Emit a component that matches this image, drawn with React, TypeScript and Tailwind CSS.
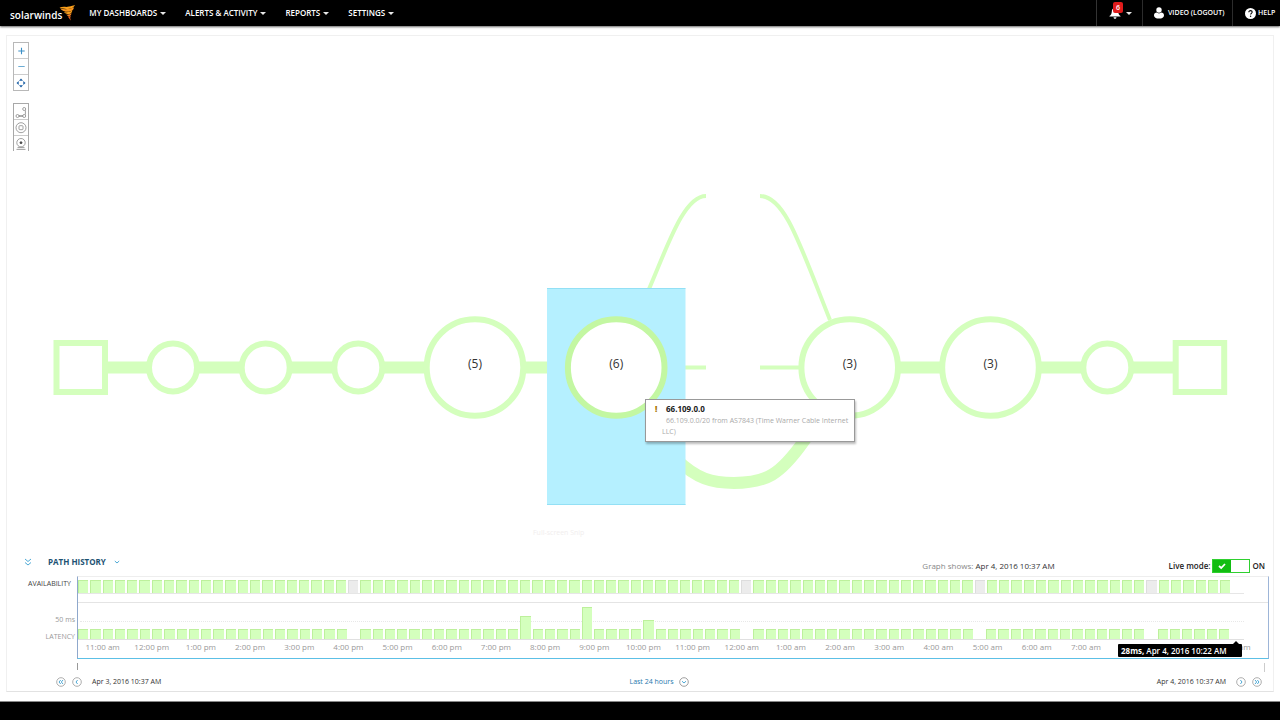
import type { ReactNode } from "react";

const BAR_COUNT = 94;
const MISSING = [22, 54, 73, 87];
const PEAKS: Record<number, number> = { 36: 23, 41: 32, 46: 19 };
const BARS = Array.from({ length: BAR_COUNT }, (_, i) => i);

const HOURS = [
  "11:00 am", "12:00 pm", "1:00 pm", "2:00 pm", "3:00 pm", "4:00 pm", "5:00 pm", "6:00 pm",
  "7:00 pm", "8:00 pm", "9:00 pm", "10:00 pm", "11:00 pm", "12:00 am", "1:00 am", "2:00 am",
  "3:00 am", "4:00 am", "5:00 am", "6:00 am", "7:00 am", "", "", "10:00 am",
];

const MENUS = ["MY DASHBOARDS", "ALERTS & ACTIVITY", "REPORTS", "SETTINGS"];

function Caret() {
  return (
    <svg viewBox="0 0 6 3" className="h-[3px] w-[6px]" fill="#e8e8e8" aria-hidden="true">
      <path d="M0 0h6L3 3z" />
    </svg>
  );
}

function Logo() {
  return (
    <a href="#home" className="flex h-full items-center text-white">
      <span className="pt-1 text-[10px] leading-4 font-semibold">solarwinds</span>
      <svg viewBox="0 0 17 16" className="-ml-[3px] h-4 w-[17px]" aria-hidden="true">
        <path d="M0.5 2.6C4 1.2 7 2.4 10 1.6 12.500 1 14 .6 16 0c-.8 1.500-1.700 2.400-3 3-3 1.200-8 1.600-12.500-.4z" fill="#f9a01b" />
        <path d="M1 3.200c4 1.600 9 1.400 13-.6L15 2.400c-.6 2.500-2.300 3.700-4.300 4.200C7.500 7.200 3.500 6.400 1 3.200z" fill="#f7941e" />
        <path d="M5 7c3 .5 6.300.2 8.300-1.500-.4 2.100-1.500 3.200-3.200 3.600C8 9.300 6.200 8.500 5 7z" fill="#f9a01b" />
        <path d="M7.400 9.600c2 .2 3.900-.2 5.200-1.300-.4 1.500-1.200 2.600-2.300 2.900-1.200.1-2.200-.3-2.900-1.600z" fill="#f58220" />
        <path d="M8.800 11.500c1.200.1 2.200-.2 3-.8-.3 1.200-.7 2-.5 2.700.2.600.4 1 .1 2.100-.4-1.400-1.700-2.400-2.600-4z" fill="#e8601c" />
      </svg>
    </a>
  );
}

function Header() {
  return (
    <header className="flex h-[26px] shrink-0 items-center bg-black pl-[10px] font-semibold text-white shadow-[0_1px_2px_#666]">
      <Logo />
      <nav className="ml-[13px] flex items-center gap-[19px]">
        {MENUS.map((m) => (
          <button key={m} type="button" className="flex items-center gap-[3px] text-[8px] leading-4 font-semibold whitespace-nowrap">
            {m}
            <Caret />
          </button>
        ))}
      </nav>
      <div className="ml-auto flex h-full items-center text-[7px] font-semibold">
        <button type="button" aria-label="6 notifications" className="relative flex h-full w-[46px] items-center gap-[5px] border-l border-[#333] pl-[12px]">
          <svg viewBox="0 0 12 12" className="h-3 w-3" fill="#fff" aria-hidden="true">
            <path d="M6 1c2.200 0 3.100 1.500 3.200 3.500C9.300 7 10 8 11.500 9v.6H.5V9C2 8 2.700 7 2.800 4.500 2.900 2.500 3.800 1 6 1zM4.500 10.300h3C7.300 11.300 6.800 11.800 6 11.800s-1.300-.5-1.500-1.500z" />
          </svg>
          <span className="absolute top-[2px] left-[16px] h-[11px] w-[10px] rounded-[2px] bg-[#e01b1b] text-center text-[7px] leading-[11px]">6</span>
          <Caret />
        </button>
        <a href="#logout" className="flex h-full w-[90px] items-center gap-1 border-l border-[#2c2c2c] pl-[11px]">
          <svg viewBox="0 0 10 12" className="h-3 w-[10px]" fill="#fff" aria-hidden="true">
            <circle cx="5" cy="3" r="2.700" />
            <path d="M0 8.500C0 6.500 1.300 5.700 2.800 5.600c1.200 1.100 3.200 1.100 4.400 0C8.700 5.700 10 6.500 10 8.500c0 2-2 3.100-5 3.100S0 10.500 0 8.500z" />
          </svg>
          <span className="whitespace-nowrap">VIDEO (LOGOUT)</span>
        </a>
        <a href="#help" className="flex h-full w-[48px] items-center gap-[2px] border-l border-[#2c2c2c] pl-[12px]">
          <svg viewBox="0 0 11 11" className="h-[11px] w-[11px] shrink-0" aria-hidden="true">
            <circle cx="5.500" cy="5.500" r="5.500" fill="#fff" />
            <path d="M3.800 4.300c0-1 .7-1.700 1.700-1.700s1.700.6 1.700 1.500c0 1.200-1.600 1.300-1.600 2.500" fill="none" stroke="#000" strokeWidth="1.100" />
            <circle cx="5.600" cy="8.300" r=".7" />
          </svg>
          <span>HELP</span>
        </a>
      </div>
    </header>
  );
}

function Tool({ label, children }: { label: string; children: ReactNode }) {
  return (
    <button type="button" aria-label={label} className="flex h-[15px] w-[14px] items-center justify-center bg-white">
      <svg viewBox="0 0 12 12" className="h-3 w-3" fill="none" stroke="#888" strokeWidth=".8" aria-hidden="true">
        {children}
      </svg>
    </button>
  );
}

function Toolbar() {
  return (
    <div className="absolute top-[6px] left-[6px] flex flex-col gap-3">
      <div className="flex flex-col gap-px border border-[#b8b8b8] bg-[#ccc]">
        <Tool label="Zoom in"><path d="M6.500 2.800v6.400M3.300 6h6.400" stroke="#3c8fc6" strokeWidth="1.100" /></Tool>
        <Tool label="Zoom out"><path d="M3.300 5.500h6.400" stroke="#6cacd4" strokeWidth="1" /></Tool>
        <Tool label="Fit to screen">
          <path d="M6 1.500l2 2.200H4zM6 10.500l2-2.200H4zM1.500 6l2.200-2v4zM10.500 6L8.300 4v4z" fill="#1b5fa5" stroke="none" />
        </Tool>
      </div>
      <div className="flex flex-col gap-px border border-b-0 border-[#a8a8a8] bg-[#ccc]">
        <Tool label="Path layout">
          <circle cx="2.500" cy="10" r="1.500" /><circle cx="9.200" cy="10" r="1.500" /><circle cx="9.200" cy="3" r="1.500" />
          <path d="M4 10h3.700" stroke="#333" /><path d="M10.400 4.300v4.400" />
        </Tool>
        <Tool label="Group nodes">
          <circle cx="6" cy="5.700" r="5" /><rect x="4" y="3.700" width="4" height="4" rx=".8" />
        </Tool>
        <Tool label="Focus node">
          <circle cx="6" cy="4.700" r="4.200" /><circle cx="6" cy="4.700" r="1" fill="#444" stroke="#444" /><path d="M2.500 9.600h7M1.500 11.400h9" />
        </Tool>
      </div>
    </div>
  );
}

const SMALL_NODES = [173, 265.7, 358.3, 1107.3];
const BIG_NODES = [
  { x: 475, n: 5 },
  { x: 616.2, n: 6 },
  { x: 849.7, n: 3 },
  { x: 990.5, n: 3 },
];

function PathMap() {
  return (
    <div className="relative min-h-[514px] flex-1 overflow-hidden">
      <svg
        viewBox="7 36 1266 514"
        preserveAspectRatio="xMidYMin meet"
        className="absolute inset-0 h-full w-full"
        role="img"
        aria-label="Network path"
      >
        <g fill="none" stroke="#d4ffbd">
          <path d="M105 367.500H570M895 367.500H1176" strokeWidth="12" />
          <path d="M649 289C668 245 684 196 706 196M760 196C785 196 800 245 830 320" strokeWidth="4" />
          <path d="M680 367.500H706M760 367.500H802" strokeWidth="4" />
          <path d="M676 459C697 479 712 483 734 483C766 483 780 475 804 441L830 405" strokeWidth="12" />
        </g>
        <rect x="547" y="288.500" width="138.500" height="216.500" fill="#b5f0ff" />
        <path d="M547 288.500H685.500M547 504.500H685.500" stroke="#93e0f5" />
        <g fill="#fff" stroke="#d4ffbd" strokeWidth="6">
          <rect x="56.500" y="343" width="48.500" height="49" />
          <rect x="1175.700" y="343" width="48.500" height="49" />
          {SMALL_NODES.map((x) => (
            <circle key={x} cx={x} cy="367.500" r="24" />
          ))}
        </g>
        {BIG_NODES.map(({ x, n }) => (
          <g key={x}>
            <circle cx={x} cy="367.500" r="48.300" fill="#fff" stroke={n === 6 ? "#c3f7a2" : "#d4ffbd"} strokeWidth="6" />
            <text x={x} y="368" textAnchor="middle" fontSize="12" fill="#333">({n})</text>
          </g>
        ))}
      </svg>
      <Toolbar />
      <div className="absolute top-[492px] left-[526px] text-[7px] leading-[10px] text-[#f1eeee]">Full-screen Snip</div>
      <div role="tooltip" className="absolute top-[363px] left-[638px] w-[210px] border border-[#999] bg-white pt-[3px] pr-1 pb-1 pl-4 shadow-[1px_2px_2px_#0004]">
        <div className="relative pl-1 text-[8px] leading-[12px] font-bold text-[#222]">
          <span className="absolute -left-[7px] font-extrabold text-[#a87400]">!</span>
          66.109.0.0
        </div>
        <p className="indent-1 text-[7px] leading-[11px] text-[#aaa]">
          66.109.0.0/20 from AS7843 (Time Warner Cable Internet LLC)
        </p>
      </div>
    </div>
  );
}

function RoundButton({ label, d }: { label: string; d: string }) {
  return (
    <button type="button" aria-label={label} className="h-[10px] w-[10px]">
      <svg viewBox="0 0 10 10" className="block h-[10px] w-[10px]" fill="none" aria-hidden="true">
        <circle cx="5" cy="5" r="4.300" stroke="#999" strokeWidth=".8" />
        <path d={d} stroke="#3a9fd0" strokeWidth=".9" />
      </svg>
    </button>
  );
}

function HistoryHeader() {
  return (
    <div className="flex h-[26px] items-start pr-2 pl-4 text-[8px]">
      <button type="button" aria-label="Collapse" className="mt-[7px] h-[10px] w-[10px]">
        <svg viewBox="0 0 10 10" className="block h-[10px] w-[10px]" fill="none" stroke="#3a9fd0" strokeWidth=".9" aria-hidden="true">
          <path d="M2 2l3 2.500L8 2M2 5.500L5 8l3-2.500" />
        </svg>
      </button>
      <button type="button" className="mt-1 ml-[15px] flex items-center gap-2 leading-4 font-bold text-[#1d5273]">
        PATH HISTORY
        <svg viewBox="0 0 6 6" className="h-[6px] w-[6px]" fill="none" stroke="#3a9fd0" strokeWidth=".9" aria-hidden="true">
          <path d="M.8 2L3 4l2.200-2" />
        </svg>
      </button>
      <p className="mt-2 ml-auto leading-4 text-[#888]">
        Graph shows: <span className="text-[#333]">Apr 4, 2016 10:37 AM</span>
      </p>
      <label className="mt-2 ml-[114px] flex h-4 items-center gap-[2px] font-semibold text-[#222]">
        Live mode:
        <input type="checkbox" defaultChecked className="sr-only" />
        <span className="flex h-[14px] w-[38px] border border-[#2fd02f] bg-white">
          <span className="flex w-[18px] items-center justify-center bg-[#12bd12]">
            <svg viewBox="0 0 8 8" className="h-2 w-2" fill="none" stroke="#fff" strokeWidth="1.800" aria-hidden="true">
              <path d="M1 4l2.200 2L7 2" />
            </svg>
          </span>
        </span>
        ON
      </label>
    </div>
  );
}

function Plot() {
  return (
    <div className="flex">
      <div className="flex w-[70px] shrink-0 flex-col text-right text-[7px] leading-[10px] text-[#999]">
        <span className="mt-[3px] pr-[6px] text-[#444]">AVAILABILITY</span>
        <span className="mt-[26px] pr-[2px]">50 ms</span>
        <span className="mt-[7px] pr-[2px]">LATENCY</span>
      </div>
      <div className="relative mr-1 min-w-0 flex-1 border-t border-r border-b border-l border-t-[#eee] border-r-[#9db5d8] border-b-[#5cc0e6] border-l-[#8fa8cc]">
        <div className="mr-6 border-b border-[#e6e6e6] pt-[3px] pr-[14px]">
          <div className="flex h-[13px] gap-[2px]">
            {BARS.map((i) => (
              <div
                key={i}
                className={
                  MISSING.includes(i)
                    ? "flex-1 border-t border-l border-[#dddddd] bg-[#ececec]"
                    : "flex-1 border-t border-l border-[#bdf09c] bg-[#d4ffbd]"
                }
              />
            ))}
          </div>
        </div>
        <div className="mt-2 border-t border-[#e4e4e4]" />
        <div className="relative mr-6 h-[37px] border-b border-[#e0e0e0] pr-[14px]">
          <div className="absolute top-[18px] right-0 left-[2px] border-t border-dotted border-[#e8e8e8]" />
          <div className="relative flex h-full items-end gap-[2px]">
            {BARS.map((i) => (
              <div
                key={i}
                className={MISSING.includes(i) ? "flex-1" : "flex-1 border-t border-l border-[#bdf09c] bg-[#d4ffbd]"}
                style={{ height: PEAKS[i] ?? 10 }}
              />
            ))}
          </div>
        </div>
        <div className="mt-[2px] mr-[10px] mb-[6px] grid grid-cols-24 text-center text-[8px] leading-[10px] text-[#999]">
          {HOURS.map((h, i) => (
            <span key={i} className="whitespace-nowrap">{h}</span>
          ))}
        </div>
        <div role="tooltip" className="absolute right-[26px] bottom-[1px] w-[124px] rounded-[1px] bg-black pl-[3px] text-[8px] leading-[13px] font-semibold whitespace-nowrap text-white">
          <span className="font-bold">28ms,</span> Apr 4, 2016 10:22 AM
          <svg viewBox="0 0 8 4" className="absolute -top-[3px] right-[2px] h-1 w-2" aria-hidden="true">
            <path d="M4 0l4 4H0z" />
          </svg>
        </div>
      </div>
    </div>
  );
}

function Timeline() {
  return (
    <div className="pr-[11px] pl-[70px]">
      <div className="-mr-[3px] flex h-4 justify-between pt-1">
        <span className="h-[7px] w-px bg-[#999]" />
        <span className="h-[9px] w-px bg-[#ccc]" />
      </div>
      <div className="-ml-[21px] grid grid-cols-[1fr_auto_1fr] items-center pb-[2px] text-[7px] leading-[14px] text-[#333]">
        <div className="flex items-center gap-[6px]">
          <RoundButton label="First" d="M4.700 3L3 5l1.700 2M7 3L5.300 5 7 7" />
          <RoundButton label="Previous" d="M5.600 3L4 5l1.600 2" />
          <span className="ml-1">Apr 3, 2016 10:37 AM</span>
        </div>
        <button type="button" className="flex items-center gap-[5px] text-[#1f78ad]">
          Last 24 hours
          <svg viewBox="0 0 10 10" className="h-[10px] w-[10px]" fill="none" aria-hidden="true">
            <circle cx="5" cy="5" r="4.300" stroke="#888" strokeWidth=".8" />
            <path d="M3 4.200L5 6l2-1.800" stroke="#3a9fd0" strokeWidth=".9" />
          </svg>
        </button>
        <div className="flex items-center justify-end gap-[6px]">
          <span className="mr-1">Apr 4, 2016 10:37 AM</span>
          <RoundButton label="Next" d="M4.400 3L6 5 4.400 7" />
          <RoundButton label="Last" d="M3 3l1.700 2L3 7M5.300 3L7 5 5.300 7" />
        </div>
      </div>
    </div>
  );
}

export default function App() {
  return (
    <div className="flex min-h-screen flex-col bg-white font-['Open_Sans',sans-serif]">
      <Header />
      <main className="flex flex-1 flex-col px-[6px] pt-[9px] pb-[9px]">
        <section className="flex flex-1 flex-col border border-[#f0f0f0] border-b-[#e2e2e2]">
          <PathMap />
          <HistoryHeader />
          <Plot />
          <Timeline />
        </section>
      </main>
      <footer className="h-[19px] shrink-0 border-t border-[#888] bg-black" />
    </div>
  );
}
